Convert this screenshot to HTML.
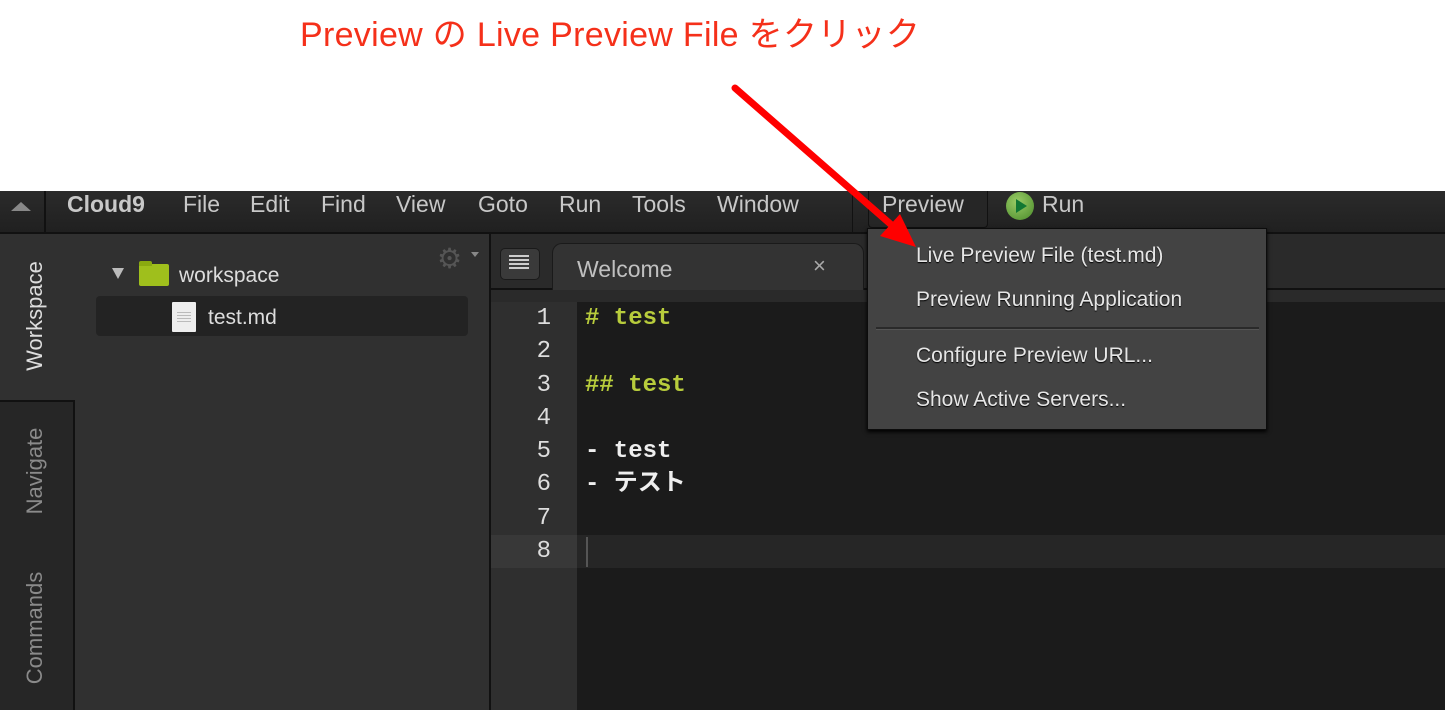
<!DOCTYPE html>
<html><head><meta charset="utf-8"><style>
body{margin:0;width:1445px;height:710px;overflow:hidden;background:#fff;position:relative;font-family:"Liberation Sans","Noto Sans CJK JP",sans-serif}
.a{position:absolute}
.menu span{position:absolute;top:0;line-height:26px;font-size:23px;color:#c8c8c8}
.mono{font-family:"Liberation Mono","Noto Sans CJK JP",monospace;font-size:24px;font-weight:bold}
.vt{position:absolute;transform:rotate(-90deg);transform-origin:center;font-size:22px;white-space:nowrap}
.dd div{position:absolute;left:48px;font-size:21px;color:#e6e6e6;text-shadow:0 1px 1px #000}
</style></head><body>
<div class="a" style="left:300px;top:7px;font-size:34px;color:#f5301a;letter-spacing:0.3px">Preview の Live Preview File をクリック</div>

<div class="a" style="left:0;top:191px;width:1445px;height:41px;background:linear-gradient(#2b2b2b,#202020);border-bottom:2px solid #111"></div>
<div class="a" style="left:44px;top:191px;width:2px;height:41px;background:#111"></div>
<div class="a" style="left:11px;top:202px;width:0;height:0;border-left:10px solid transparent;border-right:10px solid transparent;border-bottom:9px solid #888"></div>
<div class="a menu" style="left:0;top:191px;height:26px">
<span style="left:67px;font-weight:bold">Cloud9</span>
<span style="left:183px">File</span><span style="left:250px">Edit</span><span style="left:321px">Find</span><span style="left:396px">View</span><span style="left:478px">Goto</span><span style="left:559px">Run</span><span style="left:632px">Tools</span><span style="left:717px">Window</span>
<span style="left:1042px">Run</span></div>
<div class="a" style="left:852px;top:191px;width:1px;height:41px;background:#111"></div>
<div class="a" style="left:868px;top:191px;width:118px;height:36px;background:#262626;border:1px solid #111;border-top:none;border-radius:0 0 4px 4px"></div>
<div class="a menu" style="left:882px;top:191px"><span style="left:0">Preview</span></div>
<div class="a" style="left:1006px;top:192px;width:28px;height:28px;border-radius:50%;background:radial-gradient(circle at 40% 35%,#9c6,#4a8a2a)"></div>
<div class="a" style="left:1016px;top:199px;border-left:11px solid #173;border-top:7px solid transparent;border-bottom:7px solid transparent"></div>

<div class="a" style="left:0;top:234px;width:75px;height:476px;background:#262626"></div>
<div class="a" style="left:0;top:234px;width:75px;height:166px;background:#303030"></div>
<div class="a" style="left:0;top:400px;width:73px;height:2px;background:#111"></div>
<div class="a" style="left:73px;top:400px;width:2px;height:310px;background:#111"></div>
<div class="vt" style="left:-30px;top:303px;width:130px;text-align:center;color:#ddd">Workspace</div>
<div class="vt" style="left:-30px;top:458px;width:130px;text-align:center;color:#8a8a8a">Navigate</div>
<div class="vt" style="left:-30px;top:615px;width:130px;text-align:center;color:#8a8a8a">Commands</div>

<div class="a" style="left:75px;top:234px;width:414px;height:476px;background:#303030"></div>
<div class="a" style="left:489px;top:234px;width:2px;height:476px;background:#111"></div>
<div class="a" style="left:437px;top:242px;font-size:28px;color:#555">⚙</div>
<div class="a" style="left:471px;top:252px;border-top:5px solid #888;border-left:4px solid transparent;border-right:4px solid transparent"></div>
<div class="a" style="left:112px;top:268px;border-top:11px solid #bbb;border-left:6px solid transparent;border-right:6px solid transparent"></div>
<div class="a" style="left:139px;top:264px;width:30px;height:22px;background:#9fbf1c;border-radius:2px"></div>
<div class="a" style="left:139px;top:261px;width:13px;height:5px;background:#8aaa10;border-radius:2px 2px 0 0"></div>
<div class="a" style="left:179px;top:264px;font-size:21px;color:#ddd">workspace</div>
<div class="a" style="left:96px;top:296px;width:372px;height:40px;background:#232323;border-radius:4px"></div>
<div class="a" style="left:172px;top:302px;width:24px;height:30px;background:#eee;border-radius:1px"></div>
<div class="a" style="left:177px;top:312px;width:14px;height:12px;background:repeating-linear-gradient(#bbb 0 1px,transparent 1px 3px)"></div>
<div class="a" style="left:208px;top:306px;font-size:21px;color:#ddd">test.md</div>

<div class="a" style="left:491px;top:234px;width:954px;height:54px;background:#2a2a2a;border-bottom:2px solid #111"></div>
<div class="a" style="left:500px;top:248px;width:38px;height:30px;background:#3a3a3a;border-radius:5px;border:1px solid #1a1a1a"></div>
<div class="a" style="left:509px;top:255px;width:20px;height:15px;background:repeating-linear-gradient(#ccc 0 2px,transparent 2px 4px)"></div>
<div class="a" style="left:552px;top:243px;width:310px;height:46px;background:#333;border-radius:10px 10px 0 0;border:1px solid #1a1a1a;border-bottom:none"></div>
<div class="a" style="left:577px;top:256px;font-size:23px;color:#c0c0c0">Welcome</div>
<div class="a" style="left:813px;top:253px;font-size:22px;color:#aaa">×</div>
<div class="a" style="left:491px;top:290px;width:954px;height:420px;background:#1b1b1b"></div>
<div class="a" style="left:491px;top:290px;width:86px;height:420px;background:#2f2f2f"></div>
<div class="a" style="left:491px;top:290px;width:954px;height:12px;background:#2a2a2a"></div>
<div class="a" style="left:491px;top:535px;width:954px;height:33px;background:#262626"></div>
<div class="a" style="left:491px;top:535px;width:86px;height:33px;background:#383838"></div>
<div class="a" style="left:586px;top:537px;width:2px;height:30px;background:#555"></div>
<div class="a mono" style="left:491px;top:302px;width:60px;text-align:right;line-height:33.3px;color:#ddd;font-weight:normal">1<br>2<br>3<br>4<br>5<br>6<br>7<br>8</div>
<div class="a mono" style="left:585px;top:302px;line-height:33.3px;color:#eee;white-space:pre"><span style="color:#b8cc3c"># test</span>

<span style="color:#b8cc3c">## test</span>

- test
- テスト</div>

<div class="a dd" style="left:867px;top:228px;width:398px;height:200px;background:#434343;border:1px solid #0c0c0c;box-shadow:0 2px 4px #000">
<div style="top:15px">Live Preview File (test.md)</div>
<div style="top:59px">Preview Running Application</div>
<div style="left:8px;top:98px;width:383px;height:2px;background:#2a2a2a;border-bottom:1px solid #555"></div>
<div style="top:115px">Configure Preview URL...</div>
<div style="top:159px">Show Active Servers...</div>
</div>

<svg class="a" style="left:0;top:0" width="1445" height="710"><line x1="735" y1="88" x2="895" y2="228" stroke="#f00" stroke-width="7" stroke-linecap="round"/><polygon points="916,247 880,236 900,214" fill="#f00"/></svg>
</body></html>
